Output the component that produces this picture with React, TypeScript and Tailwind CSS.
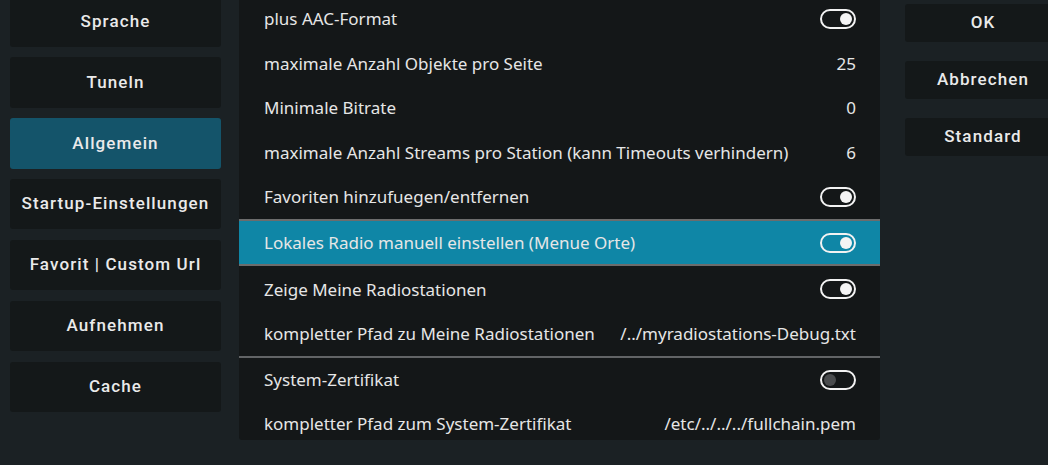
import React from 'react';

type Row = { label: string; value?: string; toggle?: boolean; on?: boolean };

const topRows: Row[] = [
  { label: 'plus AAC-Format', toggle: true, on: true },
  { label: 'maximale Anzahl Objekte pro Seite', value: '25' },
  { label: 'Minimale Bitrate', value: '0' },
  { label: 'maximale Anzahl Streams pro Station (kann Timeouts verhindern)', value: '6' },
  { label: 'Favoriten hinzufuegen/entfernen', toggle: true, on: true },
];

const activeRow: Row = { label: 'Lokales Radio manuell einstellen (Menue Orte)', toggle: true, on: true };

const midRows: Row[] = [
  { label: 'Zeige Meine Radiostationen', toggle: true, on: true },
  { label: 'kompletter Pfad zu Meine Radiostationen', value: '/../myradiostations-Debug.txt' },
];

const certRows: Row[] = [
  { label: 'System-Zertifikat', toggle: true, on: false },
  { label: 'kompletter Pfad zum System-Zertifikat', value: '/etc/../../../fullchain.pem' },
];

const categories = ['Sprache', 'Tuneln', 'Allgemein', 'Startup-Einstellungen', 'Favorit | Custom Url', 'Aufnehmen', 'Cache'];

const btnFont = { fontFamily: 'Roboto, "Noto Sans", sans-serif' };

function Toggle({ on }: { on: boolean }) {
  return (
    <div className="w-[36px] h-[20px] rounded-full border-2 border-[#f2f2f2] flex items-center px-[2px]">
      {on ? (
        <div className="ml-auto w-[12px] h-[12px] rounded-full bg-[#f4f4f4]" />
      ) : (
        <div className="w-[12px] h-[12px] rounded-full bg-[#4a4c4e]" />
      )}
    </div>
  );
}

function SettingRow({ row, h }: { row: Row; h: string }) {
  return (
    <div className={h + ' shrink-0 flex items-center justify-between pl-[25px] pr-[24px]'}>
      <span className="whitespace-nowrap">{row.label}</span>
      {row.toggle ? <Toggle on={!!row.on} /> : <span className="whitespace-nowrap">{row.value}</span>}
    </div>
  );
}

export default function App() {
  return (
    <div
      className="w-[1048px] h-[465px] overflow-hidden bg-[#1b2124] flex text-[#e6e6e6]"
      style={{ fontFamily: '"Noto Sans", "Open Sans", sans-serif' }}
    >
      {/* category list */}
      <div className="w-[239px] shrink-0 pl-[10px] pr-[18px] flex flex-col gap-[10.4px] -mt-[3.7px]">
        {categories.map(c => (
          <div
            key={c}
            style={btnFont}
            className={
              'h-[50.5px] shrink-0 rounded-[3px] flex items-center justify-center text-[17px] font-medium tracking-[1.1px] text-[#eaeaea] ' +
              (c === 'Allgemein' ? 'bg-[#14546a]' : 'bg-[#141819]')
            }
          >
            {c}
          </div>
        ))}
      </div>

      {/* settings */}
      <div className="w-[641px] shrink-0 h-[440px] bg-[#141718] overflow-hidden rounded-b-[3px] text-[17px]">
        <div className="-mt-[3.3px] flex flex-col">
          {topRows.map(r => (
            <SettingRow key={r.label} row={r} h="h-[44.5px]" />
          ))}
          <div className="h-[48.2px] shrink-0">
            <div className="h-[47px] bg-[#0f86a6] border-y-2 border-[#6c6c6c] flex items-center justify-between pl-[25px] pr-[24px]">
              <span className="whitespace-nowrap">{activeRow.label}</span>
              <Toggle on />
            </div>
          </div>
          {midRows.map(r => (
            <SettingRow key={r.label} row={r} h="h-[44px]" />
          ))}
          <div className="h-[2.7px] shrink-0 pt-[0.4px]">
            <div className="h-[2px] bg-[#626466]" />
          </div>
          {certRows.map(r => (
            <SettingRow key={r.label} row={r} h="h-[44px]" />
          ))}
        </div>
      </div>

      {/* actions */}
      <div className="pl-[25px] pt-[4px] flex flex-col gap-[19.3px]">
        {['OK', 'Abbrechen', 'Standard'].map(b => (
          <div
            key={b}
            style={btnFont}
            className="w-[156px] h-[37.7px] rounded-[3px] bg-[#141819] flex items-center justify-center text-[17px] font-medium tracking-[1.1px] text-[#eaeaea]"
          >
            {b}
          </div>
        ))}
      </div>
    </div>
  );
}
